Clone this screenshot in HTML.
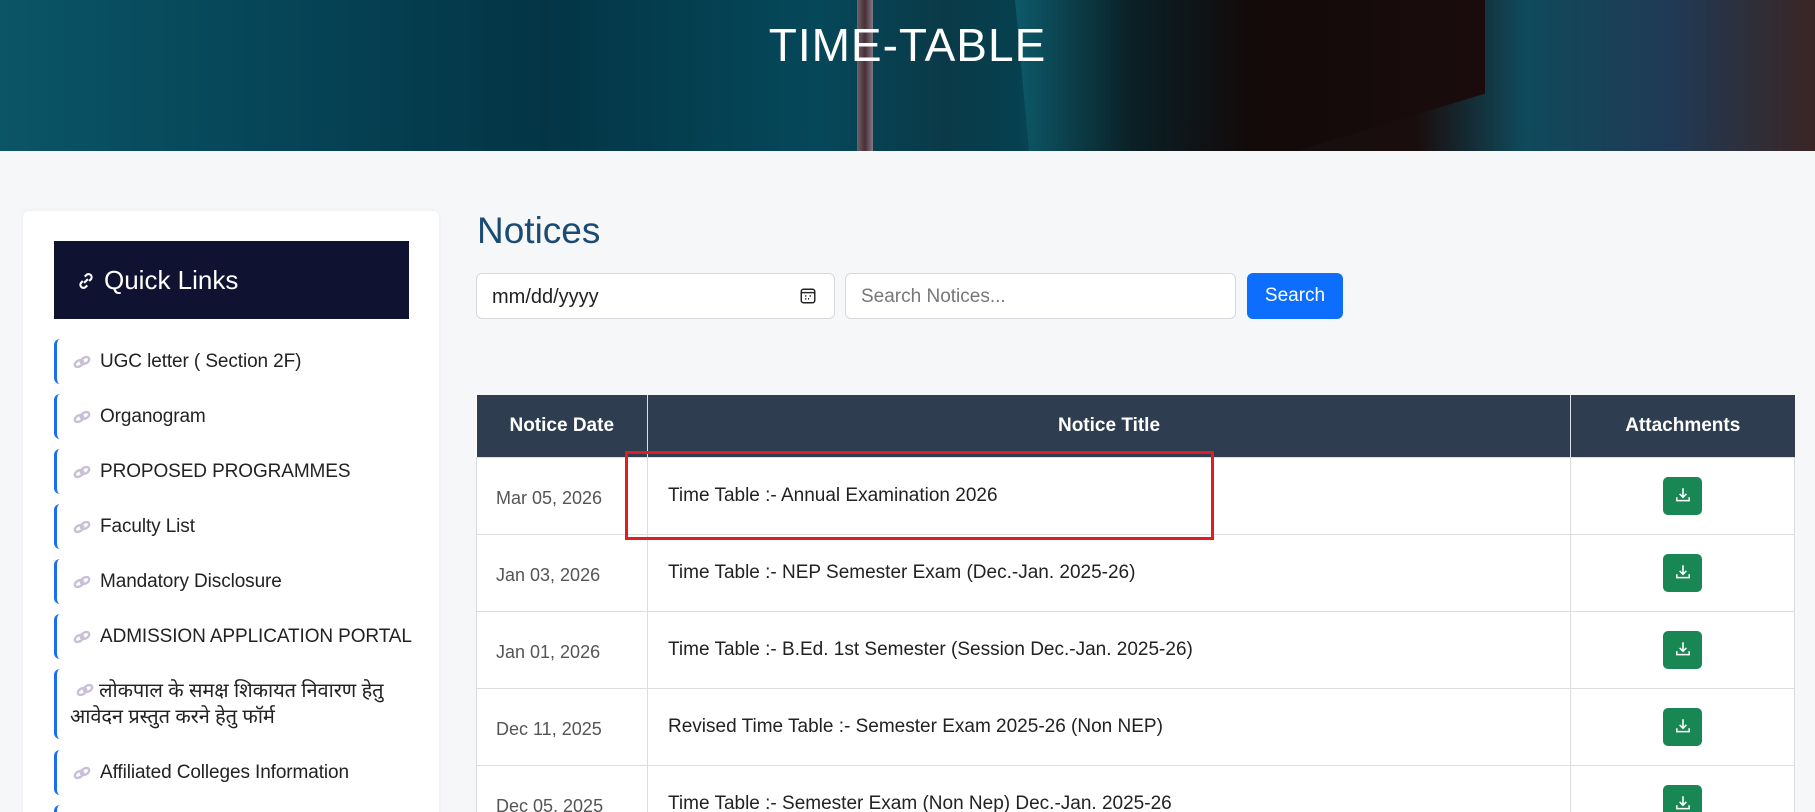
<!DOCTYPE html>
<html style="width:1815px;height:812px;overflow:hidden"><head><meta charset="utf-8"><style>
*{box-sizing:border-box;margin:0;padding:0}
body{width:1815px;height:812px;overflow:hidden;background:#f6f7f9;font-family:"Liberation Sans",sans-serif;position:relative}
.hero{position:absolute;left:0;top:0;width:1815px;height:151px;overflow:hidden;
background:linear-gradient(90deg,#0a5566 0%,#064558 15%,#033545 30%,#05485a 45%,#0a3a48 52%,#06404f 56%,#0c4f60 58%,#140f12 66%,#1a0d0d 78%,#0f4a5c 84%,#203a55 92%,#3a2524 100%)}
.hero .b1{position:absolute;left:857px;top:0;width:16px;height:151px;background:linear-gradient(90deg,#8a6a70,#5a2a30,#a08890);opacity:.8}
.hero .b2{position:absolute;left:1015px;top:0;width:470px;height:151px;background:linear-gradient(90deg,#0c5a6a,#0a2026 25%,#130a0a 50%,#1a0c0c 100%);clip-path:polygon(0 0,100% 0,100% 62%,60% 100%,3% 100%)}
.hero h1{position:absolute;left:0;right:0;top:18px;text-align:center;color:#fff;font-weight:400;font-size:46px;letter-spacing:1px}
.card{position:absolute;left:23px;top:211px;width:416px;height:610px;background:#fff;border-radius:6px;box-shadow:0 0 4px rgba(0,0,0,.05);overflow:hidden}
.ql{position:absolute;left:54px;top:241px;width:355px;height:78px;background:#101232;color:#fff;font-size:26px;padding:24px 0 0 22px}
.ql svg{vertical-align:-2px;margin-right:8px}
.li{position:absolute;left:54px;width:355px;border-left:3px solid #1a6ef0;border-radius:6px 0 0 6px;font-size:19px;color:#222;padding-left:16px;display:flex;align-items:center;white-space:nowrap;letter-spacing:-0.1px}
.li svg{margin-right:9px;flex:none}
.notices{position:absolute;left:477px;top:210px;font-size:37px;color:#1b4b72}
.inp{position:absolute;top:273px;height:46px;background:#fff;border:1px solid #d6d9dd;border-radius:6px;font-size:19px;padding:12px 15px;color:#222}
.btn{position:absolute;left:1247px;top:273px;width:96px;height:46px;background:#0d6efd;color:#fff;border-radius:6px;font-size:19px;text-align:center;line-height:46px}
table{position:absolute;left:476px;top:395px;width:1319px;border-collapse:collapse;background:#fff}
th{background:#2e3e50;color:#fff;font-weight:600;font-size:19px;height:62px;border-right:1px solid #dde;}
td{border:1px solid #ddd;height:77px;font-size:19px;color:#222}
td.d{color:#555;padding-left:19px;padding-top:6px;font-size:18px}
td.t{padding-left:20px}
td.a{text-align:center}
.dl{display:inline-block;width:39px;height:38px;background:#198754;border-radius:5px;vertical-align:middle;padding-top:9px}
.red{position:absolute;left:625px;top:451px;width:589px;height:89px;border:3px solid #e01e22}
</style></head><body>
<div class="hero"><div class="b1"></div><div class="b2"></div><h1>TIME-TABLE</h1></div>
<div class="card"></div>
<div class="ql"><svg width="20" height="20" viewBox="0 0 16 16" fill="none" stroke="#fff" stroke-width="1.7"><path d="M6.5 9.5l3-3M7 4.5l1.5-1.5a2.5 2.5 0 013.5 3.5L10.5 8M9 11.5L7.5 13A2.5 2.5 0 014 9.5L5.5 8"/></svg>Quick Links</div>
<div class="li" style="top:339px;height:45px"><svg width="18" height="14" viewBox="0 0 18 14" fill="none" stroke="#c9c0d6" stroke-width="2.4"><ellipse cx="6" cy="8.5" rx="4.5" ry="3" transform="rotate(-30 6 8.5)"/><ellipse cx="12" cy="5.5" rx="4.5" ry="3" transform="rotate(-30 12 5.5)"/></svg>UGC letter ( Section 2F)</div>
<div class="li" style="top:394px;height:45px"><svg width="18" height="14" viewBox="0 0 18 14" fill="none" stroke="#c9c0d6" stroke-width="2.4"><ellipse cx="6" cy="8.5" rx="4.5" ry="3" transform="rotate(-30 6 8.5)"/><ellipse cx="12" cy="5.5" rx="4.5" ry="3" transform="rotate(-30 12 5.5)"/></svg>Organogram</div>
<div class="li" style="top:449px;height:45px"><svg width="18" height="14" viewBox="0 0 18 14" fill="none" stroke="#c9c0d6" stroke-width="2.4"><ellipse cx="6" cy="8.5" rx="4.5" ry="3" transform="rotate(-30 6 8.5)"/><ellipse cx="12" cy="5.5" rx="4.5" ry="3" transform="rotate(-30 12 5.5)"/></svg>PROPOSED PROGRAMMES</div>
<div class="li" style="top:504px;height:45px"><svg width="18" height="14" viewBox="0 0 18 14" fill="none" stroke="#c9c0d6" stroke-width="2.4"><ellipse cx="6" cy="8.5" rx="4.5" ry="3" transform="rotate(-30 6 8.5)"/><ellipse cx="12" cy="5.5" rx="4.5" ry="3" transform="rotate(-30 12 5.5)"/></svg>Faculty List</div>
<div class="li" style="top:559px;height:45px"><svg width="18" height="14" viewBox="0 0 18 14" fill="none" stroke="#c9c0d6" stroke-width="2.4"><ellipse cx="6" cy="8.5" rx="4.5" ry="3" transform="rotate(-30 6 8.5)"/><ellipse cx="12" cy="5.5" rx="4.5" ry="3" transform="rotate(-30 12 5.5)"/></svg>Mandatory Disclosure</div>
<div class="li" style="top:614px;height:45px"><svg width="18" height="14" viewBox="0 0 18 14" fill="none" stroke="#c9c0d6" stroke-width="2.4"><ellipse cx="6" cy="8.5" rx="4.5" ry="3" transform="rotate(-30 6 8.5)"/><ellipse cx="12" cy="5.5" rx="4.5" ry="3" transform="rotate(-30 12 5.5)"/></svg>ADMISSION APPLICATION PORTAL</div>
<div class="li" style="top:669px;height:70px;display:block;white-space:normal;padding-top:9px;padding-left:13px;line-height:26px;font-family:'Liberation Sans','Noto Sans CJK SC',sans-serif;font-size:20px"><svg width="18" height="14" viewBox="0 0 18 14" fill="none" stroke="#c9c0d6" stroke-width="2.4" style="margin-left:6px;margin-right:5px"><ellipse cx="6" cy="8.5" rx="4.5" ry="3" transform="rotate(-30 6 8.5)"/><ellipse cx="12" cy="5.5" rx="4.5" ry="3" transform="rotate(-30 12 5.5)"/></svg>लोकपाल के समक्ष शिकायत निवारण हेतु आवेदन प्रस्तुत करने हेतु फॉर्म</div>
<div class="li" style="top:750px;height:45px"><svg width="18" height="14" viewBox="0 0 18 14" fill="none" stroke="#c9c0d6" stroke-width="2.4"><ellipse cx="6" cy="8.5" rx="4.5" ry="3" transform="rotate(-30 6 8.5)"/><ellipse cx="12" cy="5.5" rx="4.5" ry="3" transform="rotate(-30 12 5.5)"/></svg>Affiliated Colleges Information</div>
<div class="li" style="top:805px;height:7px;border-radius:6px 0 0 0"></div>

<div class="notices">Notices</div>
<div class="inp" style="left:476px;width:359px;font-size:20px">mm/dd/yyyy<svg style="position:absolute;right:17px;top:13px" width="18" height="18" viewBox="0 0 16 16" fill="none" stroke="#222" stroke-width="1.3"><rect x="2" y="2" width="12" height="12" rx="2"/><path d="M2 5h12"/><path d="M5.5 8h1M9.5 8h1M5.5 10.5h1M8 10.5h1" stroke-width="1.5"/></svg></div>
<div class="inp" style="left:845px;width:391px;color:#777">Search Notices...</div>
<div class="btn">Search</div>

<table>
<tr><th style="width:171px">Notice Date</th><th style="width:923px">Notice Title</th><th style="border-right:0">Attachments</th></tr>
<tr><td class="d">Mar 05, 2026</td><td class="t">Time Table :- Annual Examination 2026</td><td class="a"><span class="dl"><svg width="18" height="18" viewBox="0 0 16 16" fill="none" stroke="#fff" stroke-width="1.4"><path d="M8 2v8M5 7l3 3 3-3M2.5 10v3h11v-3"/></svg></span></td></tr>
<tr><td class="d">Jan 03, 2026</td><td class="t">Time Table :- NEP Semester Exam (Dec.-Jan. 2025-26)</td><td class="a"><span class="dl"><svg width="18" height="18" viewBox="0 0 16 16" fill="none" stroke="#fff" stroke-width="1.4"><path d="M8 2v8M5 7l3 3 3-3M2.5 10v3h11v-3"/></svg></span></td></tr>
<tr><td class="d">Jan 01, 2026</td><td class="t">Time Table :- B.Ed. 1st Semester (Session Dec.-Jan. 2025-26)</td><td class="a"><span class="dl"><svg width="18" height="18" viewBox="0 0 16 16" fill="none" stroke="#fff" stroke-width="1.4"><path d="M8 2v8M5 7l3 3 3-3M2.5 10v3h11v-3"/></svg></span></td></tr>
<tr><td class="d">Dec 11, 2025</td><td class="t">Revised Time Table :- Semester Exam 2025-26 (Non NEP)</td><td class="a"><span class="dl"><svg width="18" height="18" viewBox="0 0 16 16" fill="none" stroke="#fff" stroke-width="1.4"><path d="M8 2v8M5 7l3 3 3-3M2.5 10v3h11v-3"/></svg></span></td></tr>
<tr><td class="d">Dec 05, 2025</td><td class="t">Time Table :- Semester Exam (Non Nep) Dec.-Jan. 2025-26</td><td class="a"><span class="dl"><svg width="18" height="18" viewBox="0 0 16 16" fill="none" stroke="#fff" stroke-width="1.4"><path d="M8 2v8M5 7l3 3 3-3M2.5 10v3h11v-3"/></svg></span></td></tr>
</table>
<div class="red"></div>
</body></html>
